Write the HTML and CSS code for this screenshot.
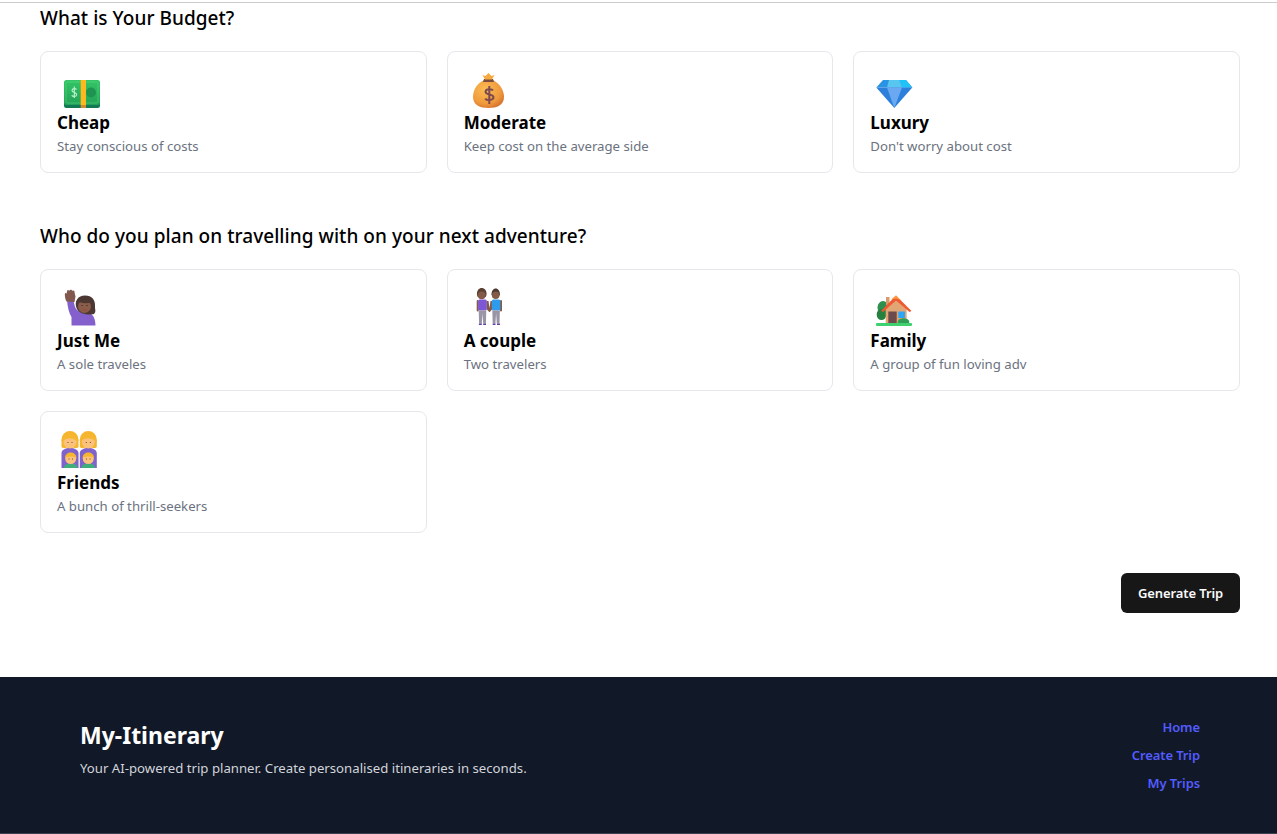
FILE: index.html
```html
<!DOCTYPE html>
<html lang="en">
<head>
    <meta charset="UTF-8">
    <meta name="viewport" content="width=device-width, initial-scale=1.0">
    <title>My-Itinerary</title>
    <link rel="stylesheet" href="styles.css">
</head>
<body>
    <div class="top-line"></div>
    <main class="page">
        <section class="section">
            <h2>What is Your Budget?</h2>
            <div class="options">
                <div class="card">
                    <svg class="emoji" viewBox="0 0 48 40">
                        <defs>
                            <linearGradient id="cash" x1="0" y1="0" x2="0" y2="1"><stop offset="0" stop-color="#35c566"/><stop offset="1" stop-color="#22a257"/></linearGradient>
                        </defs>
                        <rect x="7" y="14" width="36" height="26" rx="2.5" fill="#127a52"/>
                        <rect x="7" y="12" width="36" height="25" rx="2.5" fill="url(#cash)"/>
                        <rect x="9" y="14" width="32" height="21" rx="1.5" fill="none" stroke="#5fdc8b" stroke-width=".5"/>
                        <circle cx="34" cy="24.5" r="5" fill="#1f9350"/>
                        <path d="M19.500 21.500c-.6-1.200-4.500-1.400-4.500 1 0 2.600 4.700 1.400 4.700 4 0 2.400-4 2.300-5 .9M17.300 18.500v11.500" fill="none" stroke="#bdf2cf" stroke-width="1.100"/>
                        <rect x="23.700" y="12" width="5.300" height="25" fill="#ffb91f"/>
                        <rect x="23.700" y="37" width="5.300" height="3" fill="#cf8a35"/>
                    </svg>
                    <div class="title">Cheap</div>
                    <div class="desc">Stay conscious of costs</div>
                </div>
                <div class="card">
                    <svg class="emoji" viewBox="0 0 48 40">
                        <defs>
                            <radialGradient id="bag" cx=".4" cy=".35" r=".75"><stop offset="0" stop-color="#fbbd55"/><stop offset=".65" stop-color="#f09a3c"/><stop offset="1" stop-color="#cf6a2c"/></radialGradient>
                        </defs>
                        <path d="M20 12c-8 4-11 11-11 17 0 8 7 11 15.500 11S40 37 40 29c0-6-3.500-13-11-17z" fill="url(#bag)"/>
                        <path d="M20 11h9l1 3h-11z" fill="#7a4d3f"/>
                        <path d="M18.500 7l3 1 3-3 3 3 3-1-2.500 4.500h-7z" fill="#f6a93f"/>
                        <path d="M29 22.500c-1-1.800-7.500-2-7.500 1.300 0 3.600 8 1.900 8 5.500 0 3.400-7 3.300-8.300 1.300M25.300 18v18" fill="none" stroke="#7d4a4e" stroke-width="2"/>
                    </svg>
                    <div class="title">Moderate</div>
                    <div class="desc">Keep cost on the average side</div>
                </div>
                <div class="card">
                    <svg class="emoji" viewBox="0 0 48 40">
                        <path d="M13 12h23l6.300 7.500H6.300z" fill="#2b93e4"/>
                        <path d="M28 12h8l6.300 7.500H32z" fill="#1fc3f7"/>
                        <path d="M19 12h10l3 7.500H17z" fill="#59c6ef"/>
                        <path d="M6.300 19.500h36L24.300 40z" fill="#2c80dc"/>
                        <path d="M17 19.500h15L24.300 40z" fill="#6aa9f2"/>
                    </svg>
                    <div class="title">Luxury</div>
                    <div class="desc">Don't worry about cost</div>
                </div>
            </div>
        </section>
        <section class="section">
            <h2>Who do you plan on travelling with on your next adventure?</h2>
            <div class="options">
                <div class="card">
                    <svg class="emoji" viewBox="0 0 48 40">
                        <path d="M10 14h6.500c.5 4 1.500 8 3.500 10 2 1.500 4 2 8 2 6 0 10.500 4 10.500 13.500H14.500V31C12 27 10.500 21 10 14z" fill="#8460cc"/>
                        <path d="M9.500 15.500C8 13 7.500 9 8 7l1.500.5L10.500 4l2 .5 1.500-1 1.500 1.300 1.700-.3.800 4 .5 2-1 5.500z" fill="#82584e"/>
                        <path d="M19.500 22c-2.500-7 1.500-12.500 8.500-12.500S38.500 14 38 20.500c-.2 3 1.500 5-1 7.500-3.500 1-15 1-17.500-6z" fill="#4c3733"/>
                        <circle cx="27.500" cy="20.500" r="6.500" fill="#8a5c4a"/>
                        <path d="M21.500 15.500c3-3.500 10-3.500 12 1-3.500 1-9 1-12-1z" fill="#4c3733"/>
                        <path d="M24.500 19.500h1M29.500 19.500h1" stroke="#2e1f1c" stroke-width="1.200"/>
                        <path d="M25.500 24h4" stroke="#a0453f" stroke-width="1"/>
                    </svg>
                    <div class="title">Just Me</div>
                    <div class="desc">A sole traveles</div>
                </div>
                <div class="card">
                    <svg class="emoji" viewBox="0 0 48 40">
                        <path d="M13 9c-.5-4.500 2-7 4.700-7s5.300 2.500 4.800 7l-.8 2h-8z" fill="#5a4232"/>
                        <circle cx="17.700" cy="9.300" r="3.900" fill="#835a48"/>
                        <path d="M27.500 8.500c0-3.500 1.800-6 4.200-6s4.200 2.500 4.200 6l-.8 1.500h-6.800z" fill="#4a3830"/>
                        <circle cx="31.700" cy="9.300" r="3.800" fill="#835a48"/>
                        <rect x="12.700" y="14" width="2" height="11.500" rx="1" fill="#835a48"/>
                        <rect x="36" y="14" width="2" height="11.500" rx="1" fill="#835a48"/>
                        <path d="M22.500 15h2l1 7 1-7h2v8l-2.700 3h-.6l-2.700-3z" fill="#835a48"/>
                        <rect x="14.200" y="13.500" width="8.600" height="11" rx="1.500" fill="#7e57d6"/>
                        <rect x="27.800" y="13.500" width="8.600" height="11" rx="1.500" fill="#2f9bec"/>
                        <path d="M14.700 24.500h7.600l-.4 13h-2.700l-.7-10-.7 10h-2.700z" fill="#9a95a6"/>
                        <path d="M28.300 24.500h7.600l-.4 13h-2.700l-.7-10-.7 10h-2.700z" fill="#9a95a6"/>
                        <path d="M15 37.500h2.800V39h-3zM19.200 37.500H22V39h-2.800zM28.700 37.500h2.800V39h-2.800zM33 37.500h2.800l.2 1.500h-3z" fill="#5c3fa0"/>
                    </svg>
                    <div class="title">A couple</div>
                    <div class="desc">Two travelers</div>
                </div>
                <div class="card">
                    <svg class="emoji" viewBox="0 0 48 40">
                        <ellipse cx="13" cy="21.500" rx="5.500" ry="6.500" fill="#2f8f4f"/>
                        <ellipse cx="11.500" cy="28.500" rx="4.800" ry="5.500" fill="#26803f"/>
                        <rect x="16" y="11" width="3.500" height="8" fill="#d99a6c"/>
                        <path d="M15.700 23l10-9.500 11 9.500v15H15.700z" fill="#e2a674"/>
                        <path d="M11 25L26 9.500 41.500 25l-2 1L26 14.500 13 26z" fill="#ef5a32"/>
                        <path d="M21 13.500l5-4 4.500 4.500-4.500-1.500z" fill="#ff9a3d"/>
                        <rect x="18.300" y="25.500" width="8.400" height="11.500" fill="#6d4a4c"/>
                        <rect x="28.300" y="25.500" width="6.700" height="6.500" fill="#2fa6f5"/>
                        <ellipse cx="33.500" cy="36" rx="5.800" ry="3.800" fill="#2f9d55"/>
                        <rect x="6" y="37" width="36" height="3" rx="1" fill="#3fd06f"/>
                    </svg>
                    <div class="title">Family</div>
                    <div class="desc">A group of fun loving adv</div>
                </div>
                <div class="card">
                    <svg class="emoji" viewBox="0 0 48 40">
                        <path d="M4.500 25c0-3 4-5 8.500-5s8.500 2 8.500 5v15h-17zM22.800 25c0-3 4-5 8.500-5s8.500 2 8.500 5v15h-17z" fill="#7f62cc"/>
                        <circle cx="13" cy="11.500" r="8.500" fill="#f5b52d"/>
                        <circle cx="31.300" cy="11.500" r="8.500" fill="#f5b52d"/>
                        <path d="M4.500 12v7c2 2 5 1 6 0h5c1 1 4 2 6 0v-7zM22.800 12v7c2 2 5 1 6 0h5c1 1 4 2 6 0v-7z" fill="#f5b52d"/>
                        <circle cx="13" cy="14" r="6.500" fill="#fbc27c"/>
                        <circle cx="31.300" cy="14" r="6.500" fill="#fbc27c"/>
                        <path d="M6.500 13c2-3 9-4 13 0-1-7.500-12-7.500-13 0zM24.800 13c2-3 9-4 13 0-1-7.500-12-7.500-13 0z" fill="#f5b52d"/>
                        <path d="M10.500 14.500h1M14.500 14.500h1M28.800 14.500h1M32.800 14.500h1" stroke="#7a4a2a" stroke-width="1"/>
                        <path d="M7 40c0-3 2.500-4.500 6.700-4.500s6.700 1.500 6.700 4.500zM24.600 40c0-3 2.500-4.500 6.700-4.500s6.700 1.500 6.700 4.500z" fill="#3fae7a"/>
                        <circle cx="13.700" cy="30.500" r="5.500" fill="#fbc27c"/>
                        <circle cx="31.300" cy="30.500" r="5.500" fill="#fbc27c"/>
                        <path d="M8 30c0-7.500 11.500-7.500 11.500 0-2-2-9-2-11.500 0zM25.600 30c0-7.500 11.500-7.500 11.500 0-2-2-9-2-11.500 0z" fill="#f5b52d"/>
                        <path d="M11.500 31h1M15 31h1M29 31h1M32.500 31h1" stroke="#7a4a2a" stroke-width="1"/>
                    </svg>
                    <div class="title">Friends</div>
                    <div class="desc">A bunch of thrill-seekers</div>
                </div>
            </div>
        </section>
        <div class="actions">
            <button class="generate">Generate Trip</button>
        </div>
    </main>
    <footer class="footer">
        <div class="brand">
            <h3>My-Itinerary</h3>
            <p>Your AI-powered trip planner. Create personalised itineraries in seconds.</p>
        </div>
        <nav class="footer-links">
            <a href="#">Home</a>
            <a href="#">Create Trip</a>
            <a href="#">My Trips</a>
        </nav>
    </footer>
</body>
</html>
```

FILE: styles.css
```css
* {
    box-sizing: border-box;
}
body {
    font-family: "Noto Sans", "Open Sans", sans-serif;
    margin: 0;
    padding: 0;
    background-color: white;
    color: #000;
}
.top-line {
    height: 1px;
    margin-top: 2px;
    background-color: #ccc;
}
.page {
    padding: 1px 37px 0 40px;
}
.section {
    margin-bottom: 49px;
}
.section:last-of-type {
    margin-bottom: 40px;
}
h2 {
    margin: 0 0 19px;
    font-size: 19px;
    line-height: 28px;
    font-weight: 500;
    letter-spacing: 0.05px;
}
.options {
    display: grid;
    grid-template-columns: repeat(3, 1fr);
    gap: 20px;
}
.card {
    height: 122px;
    padding: 16px;
    border: 1px solid #e5e7eb;
    border-radius: 8px;
}
.emoji {
    display: block;
    width: 48px;
    height: 40px;
    overflow: visible;
}
.title {
    padding-top: 1px;
    margin-bottom: -1px;
    font-size: 17px;
    line-height: 28px;
    font-weight: 700;
}
.desc {
    font-size: 13.2px;
    line-height: 20px;
    color: #6b7280;
}
.actions {
    display: flex;
    justify-content: flex-end;
    margin-bottom: 64px;
}
.generate {
    width: 119px;
    height: 40px;
    border: none;
    border-radius: 6px;
    background-color: #171717;
    color: #fafafa;
    font-family: inherit;
    font-size: 13px;
    font-weight: 600;
    letter-spacing: -0.1px;
}
.footer {
    display: flex;
    justify-content: space-between;
    height: 157px;
    padding: 40px 77px 0 80px;
    background-color: #111827;
    border-bottom: 1px solid #374151;
}
.brand h3 {
    margin: 2px 0 7px;
    font-size: 23px;
    line-height: 32px;
    font-weight: 700;
    color: white;
}
.brand p {
    margin: 0;
    font-size: 13.2px;
    line-height: 20px;
    color: #d1d5db;
}
.footer-links {
    display: flex;
    flex-direction: column;
    align-items: flex-end;
    gap: 8px;
}
.footer-links a {
    font-size: 13px;
    line-height: 20px;
    font-weight: 600;
    letter-spacing: -0.1px;
    color: #525cff;
    text-decoration: none;
}
```
